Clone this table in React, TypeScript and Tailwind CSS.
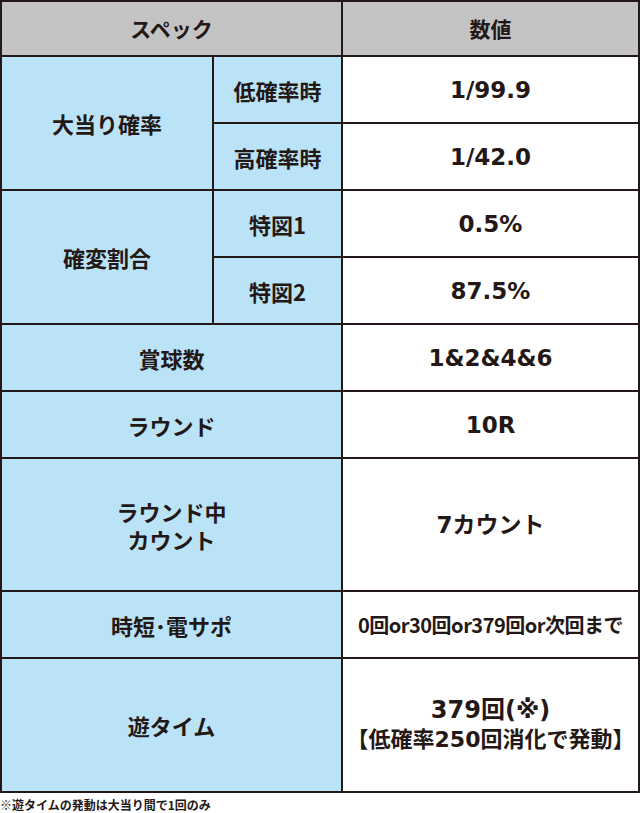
import React from "react";

function Cell({ className = "", children }: { className?: string; children: React.ReactNode }) {
  return (
    <div className={`flex items-center justify-center text-center font-bold text-[#231815] ${className}`}>
      {children}
    </div>
  );
}

export default function App() {
  const lab = "bg-[#bbe3f7] text-[22px] leading-[28px]";
  const val =
    "bg-white text-[23px] leading-[30px] font-['DejaVu_Sans','Noto_Sans_CJK_JP',sans-serif]";
  return (
    <div className="w-[640px] bg-white font-['Noto_Sans_CJK_JP','Noto_Sans',sans-serif]">
      <div className="grid grid-cols-[210px_127px_295px] grid-rows-[53px_65px_65px_65px_65px_65px_65px_131px_65px_132px] gap-[2px] p-[2px] bg-[#231815]">
        <Cell className="col-span-2 bg-[#c3c3c3] text-[21px]">スペック</Cell>
        <Cell className="bg-[#c3c3c3] text-[21px]">数値</Cell>

        <Cell className={`row-span-2 ${lab}`}>大当り確率</Cell>
        <Cell className={lab}>低確率時</Cell>
        <Cell className={val}>1/99.9</Cell>
        <Cell className={lab}>高確率時</Cell>
        <Cell className={val}>1/42.0</Cell>

        <Cell className={`row-span-2 ${lab}`}>確変割合</Cell>
        <Cell className={lab}>特図1</Cell>
        <Cell className={val}>0.5%</Cell>
        <Cell className={lab}>特図2</Cell>
        <Cell className={val}>87.5%</Cell>

        <Cell className={`col-span-2 ${lab}`}>賞球数</Cell>
        <Cell className={val}>1&amp;2&amp;4&amp;6</Cell>

        <Cell className={`col-span-2 ${lab}`}>ラウンド</Cell>
        <Cell className={val}>10R</Cell>

        <Cell className={`col-span-2 ${lab}`}>
          <div className="flex flex-col">
            <span>ラウンド中</span>
            <span>カウント</span>
          </div>
        </Cell>
        <Cell className={val}>7カウント</Cell>

        <Cell className={`col-span-2 ${lab}`}>時短･電サポ</Cell>
        <Cell className="bg-white text-[20px] leading-[26px] tracking-[-0.5px]">
          0回or30回or379回or次回まで
        </Cell>

        <Cell className={`col-span-2 ${lab}`}>遊タイム</Cell>
        <Cell className="bg-white text-[22px] leading-[30px] font-['DejaVu_Sans','Noto_Sans_CJK_JP',sans-serif]">
          <div className="flex flex-col items-center">
            <span className="text-[24px]">379回(※)</span>
            <span>【低確率250回消化で発動】</span>
          </div>
        </Cell>
      </div>
      <div className="pt-[4px] text-[12px] leading-[15px] font-bold text-[#231815]">
        ※遊タイムの発動は大当り間で1回のみ
      </div>
    </div>
  );
}
